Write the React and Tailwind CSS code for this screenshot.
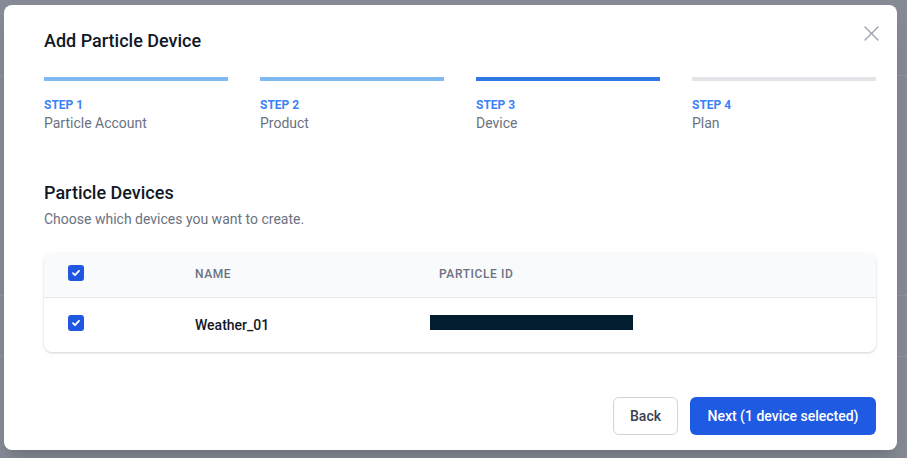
import React from "react";

const steps = [
  { n: 1, label: "Particle Account", bar: "bg-[#80b8f1]" },
  { n: 2, label: "Product", bar: "bg-[#80b8f1]" },
  { n: 3, label: "Device", bar: "bg-[#2f78e4]" },
  { n: 4, label: "Plan", bar: "bg-[#e3e3e8]" },
];

const Check = () => (
  <span className="flex h-4 w-4 -translate-y-[2px] items-center justify-center rounded-[3px] bg-[#1f57e0]">
    <svg width="10" height="10" viewBox="0 0 10 10" fill="none">
      <path d="M2 5.2l2 2 4-4.4" stroke="#fff" strokeWidth="1.8" strokeLinecap="round" strokeLinejoin="round" />
    </svg>
  </span>
);

export default function App() {
  return (
    <div className="relative h-[458px] w-[907px] overflow-hidden bg-[#858a94] font-['Roboto',sans-serif]">
      {/* page behind the overlay */}
      <div className="flex flex-col">
        <div className="h-[76px] border-b border-[#8f949d]" />
        <div className="h-[220px] border-b border-[#8f949d]" />
        <div className="h-[61px] border-b border-[#8f949d]" />
      </div>

      {/* modal */}
      <div className="absolute left-[4px] top-[5px] h-[445px] w-[893px] rounded-lg bg-white shadow-xl">
        <button className="absolute right-[16px] top-[19px] p-0.5">
          <svg width="15" height="15" viewBox="0 0 15 15" fill="none">
            <path d="M1 1l13 13M14 1L1 14" stroke="#9ca3af" strokeWidth="1.4" strokeLinecap="round" />
          </svg>
        </button>

        <div className="pl-10 pr-[21px] pt-[22px]">
          <h2 className="text-[18px] font-medium leading-7 text-[#111827]">Add Particle Device</h2>

          <div className="mt-[22px] grid grid-cols-4 gap-8">
            {steps.map(s => (
              <div key={s.n}>
                <div className={`h-1 ${s.bar}`} />
                <div className="mt-4 text-[12px] font-bold leading-4 text-[#3b82f6]">STEP {s.n}</div>
                <div className="text-[14px] leading-5 text-[#6b7280]">{s.label}</div>
              </div>
            ))}
          </div>

          <h3 className="mt-[46px] text-[18px] font-medium leading-7 text-[#111827]">Particle Devices</h3>
          <p className="mt-[2px] text-[14px] leading-5 text-[#6b7280]">Choose which devices you want to create.</p>

          <div className="mt-6 overflow-hidden rounded-lg bg-white shadow-[0_1px_3px_rgba(0,0,0,0.12),0_1px_2px_rgba(0,0,0,0.06)]">
            <div className="grid h-[45px] grid-cols-[127px_244px_1fr] items-center border-b border-[#e5e7eb] bg-[#f9fafb] px-6 text-[12px] font-medium tracking-wider text-[#6b7280]">
              <Check />
              <span className="-translate-y-[1px]">NAME</span>
              <span className="-translate-y-[1px]">PARTICLE ID</span>
            </div>
            <div className="grid h-[54px] grid-cols-[127px_244px_1fr] items-center px-6">
              <Check />
              <span className="text-[14px] font-medium text-[#111827]">Weather_01</span>
              <span className="-ml-[9px] block h-[15px] w-[203px] -translate-y-[3px] bg-[#021d2f]" />
            </div>
          </div>

          <div className="mt-[45px] flex justify-end gap-3">
            <button className="h-[38px] w-[65px] rounded-md border border-[#d1d5db] bg-white text-[14px] font-medium text-[#374151]">
              Back
            </button>
            <button className="h-[38px] w-[186px] rounded-md bg-[#1f5ae3] text-[14px] font-medium text-white">
              Next (1 device selected)
            </button>
          </div>
        </div>
      </div>
    </div>
  );
}
